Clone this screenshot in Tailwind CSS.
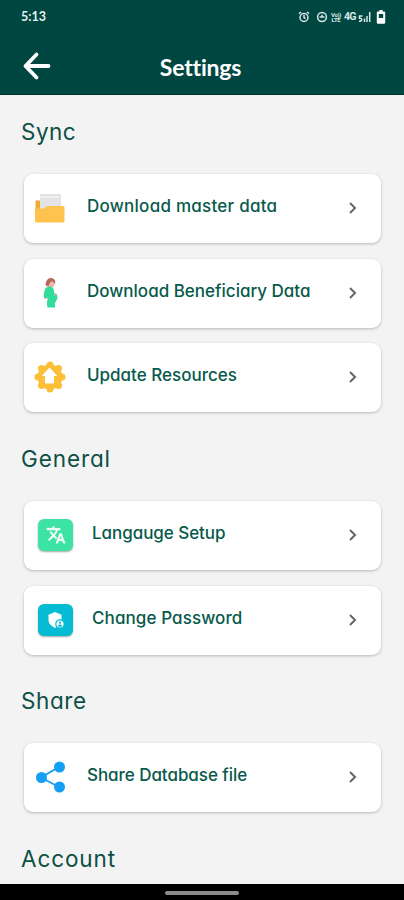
<!DOCTYPE html>
<html lang="en">
<head>
    <meta charset="UTF-8">
    <title>Settings</title>
    <meta name="viewport" content="width=device-width, initial-scale=1.0">
    <script src="https://cdn.jsdelivr.net/npm/@tailwindcss/browser@4"></script>
</head>
<body class="bg-[#f3f3f3] font-['Inter',sans-serif] [font-feature-settings:'cv11'] text-[#075a4b]">
<div class="w-[404px] h-[900px] flex flex-col overflow-hidden">
    <header class="h-[95px] shrink-0 bg-[#004641] border-b border-[#00302c] text-white">
        <!-- Status bar -->
        <div class="h-[35px] pl-[21px] pr-[18px] flex items-center justify-between">
            <span class="font-['Lato',sans-serif] text-[12.5px] font-bold text-[#e2f1ee]">5:13</span>
            <div class="flex items-center pb-px text-[#d5e8e5]">
                <svg class="w-3 h-3" viewBox="0 0 12 12" fill="none" stroke="currentColor" stroke-width="1.5"><circle cx="6" cy="6.5" r="4"/><path d="M6 4v2.7l1.6 1M1 2.6 3 1M11 2.6 9 1"/></svg>
                <svg class="w-3 h-3 ml-[6px]" viewBox="0 0 12 12" fill="none" stroke="currentColor" stroke-width="1.5"><circle cx="6" cy="6" r="4.4"/><path d="M3.6 6h4.8M6 3.7V6"/></svg>
                <span class="ml-[2px] w-[12px] flex flex-col text-center text-[6px] leading-[5.5px] font-bold font-['Roboto',sans-serif] tracking-[-0.3px]"><span>Vo))</span><span>LTE</span></span>
                <span class="ml-[2px] w-[13px] text-[10.5px] leading-3 font-bold font-['Roboto',sans-serif] tracking-[-0.8px]">4G</span>
                <svg class="w-[13px] h-3 ml-px" viewBox="0 0 13 12" fill="none" stroke="currentColor" stroke-width="1.5"><path d="M4.500 5H1.500v2.200c3-.5 3 3.300-.5 3M6.500 11V7.500M9 11V5M11.700 11V1"/></svg>
                <svg class="w-[10px] h-[14px] ml-[5px] text-white" viewBox="0 0 10 14" fill="currentColor"><path fill-rule="evenodd" d="M3.4 0h3.2v1.4H8A1.2 1.2 0 0 1 9.2 2.6v10A1.2 1.2 0 0 1 8 13.8H2a1.2 1.2 0 0 1-1.2-1.2v-10A1.2 1.2 0 0 1 2 1.4h1.4zM2.8 4v4h4.4V4z"/></svg>
            </div>
        </div>
        <!-- App bar -->
        <div class="h-[62px] grid grid-cols-[60px_1fr_60px] items-center">
            <svg class="w-[30px] h-[30px] ml-[22px]" viewBox="0 0 30 30" fill="none" stroke="currentColor" stroke-width="3.8" stroke-linecap="round" stroke-linejoin="round"><path d="M14.500 3.500 3.500 15l11 11.500M4 15h22.500"/></svg>
            <h1 class="pt-[2px] pr-[3px] text-center font-['Lato',sans-serif] text-[23px] leading-7 font-bold [font-variant-ligatures:none] tracking-[-0.2px]">Settings</h1>
        </div>
    </header>

    <main class="h-[789px] shrink-0 overflow-hidden pl-[24px] pr-[23px] pt-[17px]">
        <h2 class="-ml-[3px] h-10 leading-10 text-[22.5px] tracking-[0.5px] text-[#0b4f45]">Sync</h2>
        <div class="mt-[22px] flex flex-col gap-[15.5px]">
            <a class="h-[69px] flex items-center bg-white rounded-[9px] shadow-[0_1px_3px_rgba(0,0,0,0.25)]">
                <svg class="w-8 h-8 ml-[10px]" viewBox="0 0 32 32"><path fill="#f1ad32" d="M1.500 7.500h6V28h-6z"/><path fill="#e3e3e6" d="M6 1h21v19H6z"/><path fill="#f0f0f1" d="M6 3h19v2H6z"/><path fill="#fec34d" d="M1 15.500h9l3.500-2.500H29q1.500 0 1.500 1.500V28q0 1.500-1.500 1.500H2.500Q1 29.500 1 28z"/></svg>
                <span class="ml-[21px] pb-[3px] flex-1 whitespace-nowrap text-[17px] font-medium tracking-[0.25px]">Download master data</span>
                <svg class="w-3 h-4 mr-[22px] mb-px" viewBox="0 0 12 16" fill="none" stroke="#666" stroke-width="2"><path d="m3 3 5 5-5 5"/></svg>
            </a>
            <a class="h-[69px] flex items-center bg-white rounded-[9px] shadow-[0_1px_3px_rgba(0,0,0,0.25)]">
                <svg class="w-8 h-8 ml-[10px]" viewBox="0 0 32 32"><path fill="#f3b5a4" d="M15 4.500h5q1 3-.5 5.500L15 11.500z"/><path fill="#b9675c" d="M11.500 8C12 3.500 14 1 17 1c3.500 0 5 3 4 6.500-.5-2-2-3-3.500-3C16 5 15 7 14.500 10z"/><path fill="#32dc9b" d="M12.500 10.500 16 9.500c3 .5 4.500 3 4 6.500 3 .5 4.300 3 3 6.500-.8 2-2 2.500-2 4v4h-7.500c-.8-3.500-.5-6.500.5-9.500h-4c-.7-4 .3-8.500 2.500-11z"/><path fill="none" stroke="#f3b5a4" stroke-width="1.200" stroke-linecap="round" d="m11 21.500 2.500.5M20 18l1.800-1"/></svg>
                <span class="ml-[21px] pb-[3px] flex-1 whitespace-nowrap text-[17px] font-medium">Download Beneficiary Data</span>
                <svg class="w-3 h-4 mr-[22px] mb-px" viewBox="0 0 12 16" fill="none" stroke="#666" stroke-width="2"><path d="m3 3 5 5-5 5"/></svg>
            </a>
            <a class="h-[69px] flex items-center bg-white rounded-[9px] shadow-[0_1px_3px_rgba(0,0,0,0.25)]">
                <svg class="w-8 h-8 ml-[10px] mb-px" viewBox="0 0 32 32"><g fill="#fbbf38"><circle cx="16" cy="16" r="12.500"/><circle cx="16" cy="4" r="3.500"/><circle cx="24.500" cy="7.500" r="3.500"/><circle cx="28" cy="16" r="3.500"/><circle cx="24.500" cy="24.500" r="3.500"/><circle cx="16" cy="28" r="3.500"/><circle cx="7.500" cy="24.500" r="3.500"/><circle cx="4" cy="16" r="3.500"/><circle cx="7.500" cy="7.500" r="3.500"/></g><path fill="#fff" stroke="#fff" stroke-linejoin="round" d="m15.500 7 7 7.500h-3V22h-8v-7.500h-3z"/></svg>
                <span class="ml-[21px] pb-[3px] flex-1 whitespace-nowrap text-[17px] font-medium">Update Resources</span>
                <svg class="w-3 h-4 mr-[22px] mb-px" viewBox="0 0 12 16" fill="none" stroke="#666" stroke-width="2"><path d="m3 3 5 5-5 5"/></svg>
            </a>
        </div>

        <h2 class="mt-[27px] -ml-[3px] h-10 leading-10 text-[22.5px] tracking-[0.9px] text-[#0b4f45]">General</h2>
        <div class="mt-[22px] flex flex-col gap-[15.5px]">
            <a class="h-[69px] flex items-center bg-white rounded-[9px] shadow-[0_1px_3px_rgba(0,0,0,0.25)]">
                <span class="w-[35px] h-8 ml-[14px] mb-px flex items-center justify-center rounded-[6px] bg-[#3de3a4] shadow-[0_1px_2px_rgba(0,0,0,0.35)]">
                    <svg class="w-5 h-5" viewBox="0 0 24 24" fill="#fff" stroke="#fff" stroke-width="0.5"><path d="m12.870 15.070-2.540-2.510.03-.03A17.520 17.520 0 0 0 14.070 6H17V4h-7V2H8v2H1v2h11.170C11.500 7.920 10.440 9.750 9 11.350 8.070 10.320 7.300 9.190 6.690 8h-2c.73 1.630 1.730 3.170 2.980 4.560l-5.090 5.020L4 19l5-5 3.110 3.110zM18.500 10h-2L12 22h2l1.120-3h4.750L21 22h2zm-2.620 7 1.620-4.330L19.120 17z"/></svg>
                </span>
                <span class="ml-[19px] pb-[3px] flex-1 whitespace-nowrap text-[17px] font-medium tracking-[-0.05px]">Langauge Setup</span>
                <svg class="w-3 h-4 mr-[22px] mb-px" viewBox="0 0 12 16" fill="none" stroke="#666" stroke-width="2"><path d="m3 3 5 5-5 5"/></svg>
            </a>
            <a class="h-[69px] flex items-center bg-white rounded-[9px] shadow-[0_1px_3px_rgba(0,0,0,0.25)]">
                <span class="w-[35px] h-8 ml-[14px] mb-px flex items-center justify-center rounded-[6px] bg-[#06bcd5] shadow-[0_1px_2px_rgba(0,0,0,0.35)]">
                    <svg class="w-5 h-5" viewBox="0 0 20 20"><path fill="#fff" d="m9 2 6.500 2.700v5c0 4-3 6.500-6.500 8-3.500-1.500-6.500-4-6.500-8v-5z"/><circle cx="14" cy="14" r="4.200" fill="#fff" stroke="#06bcd5" stroke-width="1.200"/><circle cx="14" cy="12.700" r="1.100" fill="#06bcd5"/><path fill="#06bcd5" d="M11.800 16c.5-2 3.900-2 4.400 0-.8 1-3.600 1-4.400 0z"/></svg>
                </span>
                <span class="ml-[19px] pb-[3px] flex-1 whitespace-nowrap text-[17px] font-medium tracking-[0.1px]">Change Password</span>
                <svg class="w-3 h-4 mr-[22px] mb-px" viewBox="0 0 12 16" fill="none" stroke="#666" stroke-width="2"><path d="m3 3 5 5-5 5"/></svg>
            </a>
        </div>

        <h2 class="mt-[26px] -ml-[3px] h-10 leading-10 text-[22.5px] tracking-[0.6px] text-[#0b4f45]">Share</h2>
        <div class="mt-[22px] flex flex-col">
            <a class="h-[69px] flex items-center bg-white rounded-[9px] shadow-[0_1px_3px_rgba(0,0,0,0.25)]">
                <svg class="w-8 h-8 ml-[10px]" viewBox="0 0 32 32"><path fill="none" stroke="#189cf0" stroke-width="1.800" d="M25 6 7 16.500l18 9.500"/><g fill="#149ff5"><circle cx="25.500" cy="6" r="5.500"/><circle cx="7.500" cy="16.500" r="5.500"/><circle cx="25.500" cy="26" r="5.500"/></g></svg>
                <span class="ml-[21px] pb-[2px] flex-1 whitespace-nowrap text-[17px] font-medium tracking-[-0.05px]">Share Database file</span>
                <svg class="w-3 h-4 mr-[22px]" viewBox="0 0 12 16" fill="none" stroke="#666" stroke-width="2"><path d="m3 3 5 5-5 5"/></svg>
            </a>
        </div>

        <h2 class="mt-[27px] -ml-[3px] h-10 leading-10 text-[22.5px] tracking-[0.9px] text-[#0b4f45]">Account</h2>
    </main>

    <!-- Gesture bar -->
    <footer class="flex-1 bg-black flex justify-center pt-[7px]">
        <div class="w-[74px] h-[4px] rounded-full bg-[#8c8c8c]"></div>
    </footer>
</div>
</body>
</html>
